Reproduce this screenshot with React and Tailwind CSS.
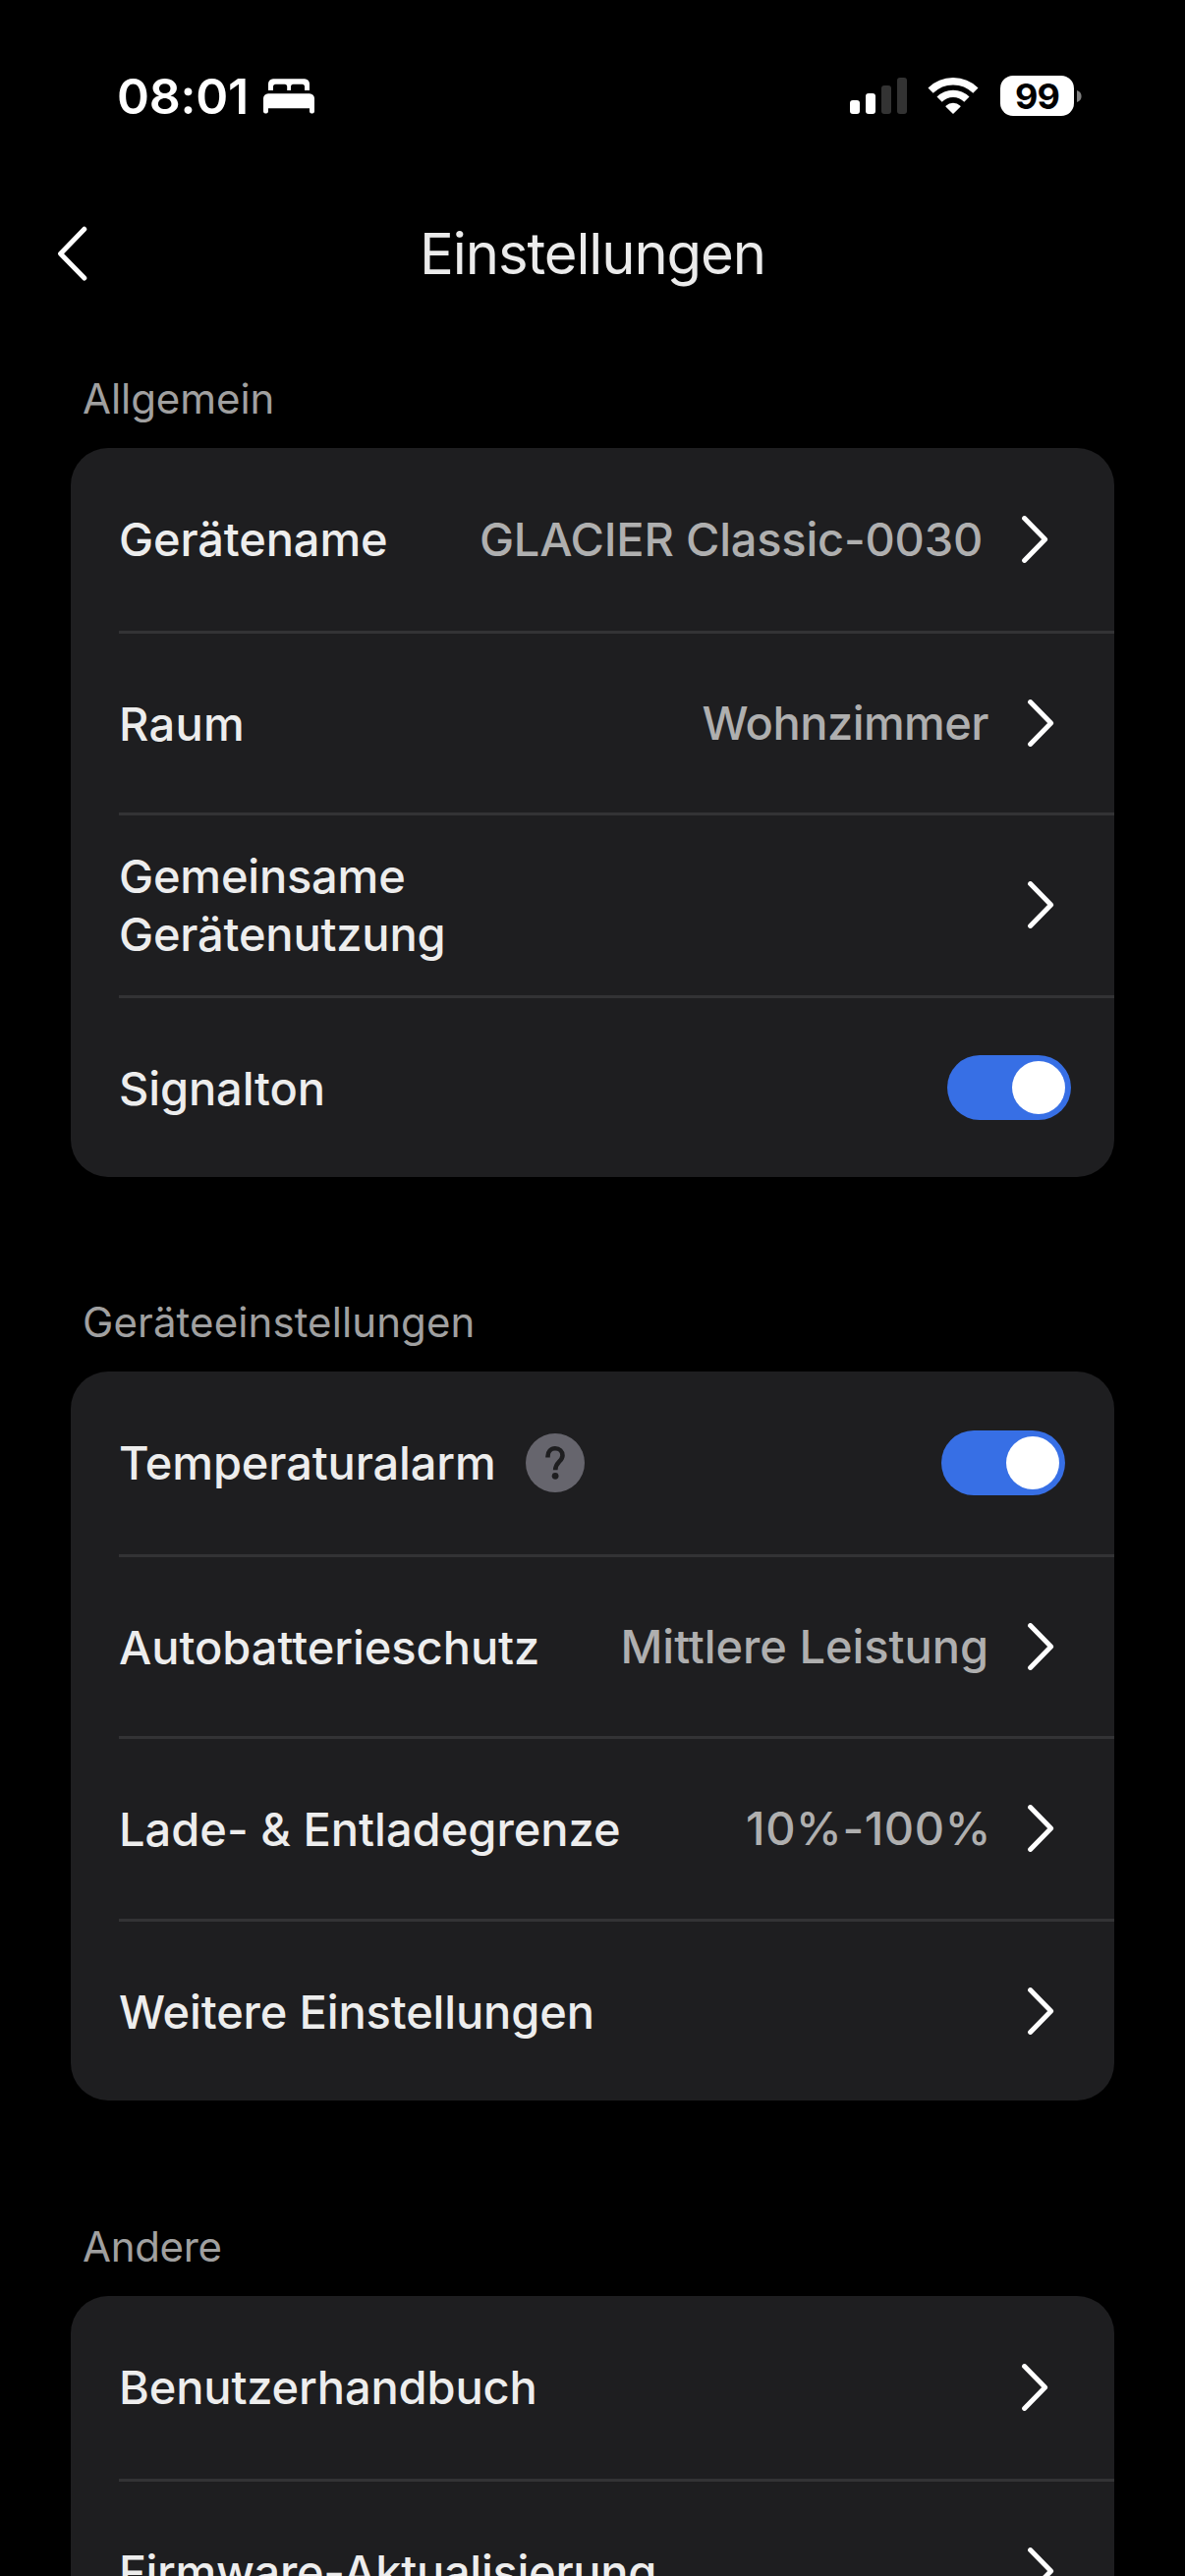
import React, { useState } from 'react';

const sections = [
    {
        title: 'Allgemein',
        className: 'mt-9',
        titleClass: 'tracking-[-0.06px]',
        rows: [
            { label: 'Gerätename', labelClass: 'tracking-[-0.14px]', value: 'GLACIER Classic-0030', valueClass: 'tracking-[-0.23px]' },
            { label: 'Raum', labelClass: 'tracking-[0.3px]', value: 'Wohnzimmer', valueClass: 'tracking-[-0.55px]' },
            { label: 'Gemeinsame Gerätenutzung', labelClass: 'tracking-[-0.2px] w-[400px]' },
            { label: 'Signalton', labelClass: 'tracking-[-0.12px]', toggle: true },
        ],
    },
    {
        title: 'Geräteeinstellungen',
        className: 'mt-[98px]',
        titleClass: 'tracking-[0.1px]',
        rows: [
            { label: 'Temperaturalarm', labelClass: 'tracking-[-0.14px]', help: true, toggle: true },
            { label: 'Autobatterieschutz', labelClass: 'tracking-[-0.04px]', value: 'Mittlere Leistung', valueClass: 'tracking-[-0.05px]' },
            { label: 'Lade- & Entladegrenze', labelClass: 'tracking-normal', value: '10%-100%', valueClass: 'tracking-[0.6px] -mr-[3px]' },
            { label: 'Weitere Einstellungen', labelClass: 'tracking-[-0.15px]' },
        ],
    },
    {
        title: 'Andere',
        className: 'mt-[99px]',
        titleClass: 'tracking-[-0.32px]',
        rows: [
            { label: 'Benutzerhandbuch', labelClass: 'tracking-[-0.15px]' },
            { label: 'Firmware-Aktualisierung', labelClass: 'tracking-[-0.28px]' },
        ],
    },
];

// Row heights include the 3px divider
const rowHeights = ['h-[189px]', 'h-[185px]', 'h-[186px] pb-px', 'h-[182px]'];

const BedIcon = () => (
    <svg width="52" height="36" viewBox="0 0 52 36" fill="white">
        <path d="M5 12V5.5A5 5 0 0 1 10 .3H42A5 5 0 0 1 47 5.5V12H42V8.2A2.5 2.5 0 0 0 39.5 5.7H30.5A2.5 2.5 0 0 0 28 8.2V12H24.2V8.2A2.5 2.5 0 0 0 21.7 5.7H12.5A2.5 2.5 0 0 0 10 8.2V12Z" />
        <path d="M0 20.5A5 5 0 0 1 5 15.3H47A5 5 0 0 1 52 20.5V33.6A1.8 1.8 0 0 1 50.2 35.4H48.8A1.8 1.8 0 0 1 47 33.6V30.3H5V33.6A1.8 1.8 0 0 1 3.2 35.4H1.8A1.8 1.8 0 0 1 0 33.6Z" />
    </svg>
);

const SignalIcon = () => (
    <svg width="58" height="37" viewBox="0 0 58 37" fill="white">
        <rect x="0" y="23" width="10" height="14" rx="3" />
        <rect x="16" y="16" width="10" height="21" rx="3" />
        <rect x="32" y="8" width="10" height="29" rx="3" fill="#333333" />
        <rect x="48" y="0" width="10" height="37" rx="3" fill="#333333" />
    </svg>
);

const WifiIcon = () => (
    <svg width="52" height="37" viewBox="0 0.5 52 37" fill="none" stroke="white" strokeWidth="7.4">
        <path d="M3.1 13.7A32.4 32.4 0 0 1 48.9 13.7" />
        <path d="M12.1 22.7A19.6 19.6 0 0 1 39.9 22.7" />
        <path d="M19.2 29.8A9.8 9.8 0 0 1 32.8 29.8L26 36.4Z" fill="white" stroke="white" strokeWidth="1.6" strokeLinejoin="round" />
    </svg>
);

const BatteryIcon = () => (
    <div className="flex items-center gap-[3px]">
        <div className="flex h-[41px] w-[75px] items-center justify-center rounded-[13px] bg-white text-[36px] font-bold leading-none tracking-[-0.8px] text-black">
            99
        </div>
        <svg width="5" height="12" viewBox="0 0 5 12" fill="#7f7f7f">
            <path d="M0 0C3 .9 4.6 3.2 4.6 6S3 11.1 0 12Z" />
        </svg>
    </div>
);

const ChevronRight = () => (
    <svg width="27" height="48" viewBox="0 0 27 48" fill="none" stroke="white" strokeWidth="5" strokeLinecap="round" strokeLinejoin="round">
        <path d="M2.6 2.6L23.6 24L2.6 45.4" />
    </svg>
);

const HelpIcon = () => (
    <svg className="ml-[30px]" width="60" height="60" viewBox="0 0 60 60">
        <circle cx="30" cy="30" r="30" fill="#66656d" />
        <path d="M22.5 24.6V23.4C22.5 18.6 25.6 15.3 30 15.3S37.5 18.4 37.5 22.4C37.5 28.2 30.2 29.2 30.2 37.2" fill="none" stroke="#1e1e20" strokeWidth="4.6" />
        <circle cx="30.1" cy="43.3" r="3.4" fill="#1e1e20" />
    </svg>
);

const Toggle = () => {
    const [on, setOn] = useState(true);

    return (
        <button
            type="button"
            role="switch"
            aria-checked={on}
            onClick={() => setOn(!on)}
            className={`flex h-[66px] w-[126px] items-center rounded-full px-1.5 ${on ? 'justify-end bg-[#376fe5]' : 'justify-start bg-[#3a3a3c]'}`}
        >
            <span className="size-[54px] rounded-full bg-white" />
        </button>
    );
};

const Row = ({ row, index }) => {
    // The first row of a card sits 6px further in than the others
    const inset = index === 0
        ? (row.toggle ? 'pr-[50px]' : 'pr-[67px]')
        : (row.toggle ? 'pr-11' : 'pr-[61px]');

    return (
        <div className={`ml-[49px] flex items-center ${inset} ${rowHeights[index]} ${index === 3 ? '' : 'border-b-[3px] border-[#333335]'}`}>
            <span className={`text-[47px] font-medium leading-[59px] text-[#ededed] ${index === 0 ? 'pb-0.5' : ''} ${row.labelClass}`}>
                {row.label}
            </span>
            {row.help && <HelpIcon />}
            <div className="ml-auto flex items-center gap-10">
                {row.value && (
                    <span className={`pb-0.5 text-[47px] font-medium leading-[59px] text-[#afafaf] ${row.valueClass}`}>{row.value}</span>
                )}
                {row.toggle ? <Toggle /> : <ChevronRight />}
            </div>
        </div>
    );
};

const App = () => {
    return (
        <div className="h-[2622px] w-[1206px] overflow-hidden bg-black font-['Inter',sans-serif]">
            <div className="flex h-[196px] items-center justify-between pl-[119px] pr-[105px]">
                <div className="flex items-center gap-[15px]">
                    <span className="text-[50px] font-semibold leading-none tracking-[-0.23px] text-white">08:01</span>
                    <BedIcon />
                </div>
                <div className="mb-px flex items-center gap-[22px]">
                    <div className="flex items-center gap-[21px]">
                        <SignalIcon />
                        <WifiIcon />
                    </div>
                    <BatteryIcon />
                </div>
            </div>

            <header className="grid h-[124px] grid-cols-[1fr_auto_1fr] items-center px-[58px]">
                <svg width="31" height="56" viewBox="0 0 31 56" fill="none" stroke="white" strokeWidth="5" strokeLinecap="round" strokeLinejoin="round">
                    <path d="M27.8 3.2L3.6 28.2L27.8 53" />
                </svg>
                <h1 className="text-[58px] font-normal leading-none tracking-[-1.12px] text-[#ebebeb]">Einstellungen</h1>
            </header>

            {sections.map((section) => (
                <section key={section.title} className={`px-[72px] ${section.className}`}>
                    <h2 className={`flex h-[100px] items-center pb-0.5 pl-3 text-[42px] font-normal text-[#a0a0a0] ${section.titleClass}`}>
                        {section.title}
                    </h2>
                    <div className="rounded-[38px] bg-[#1e1e20]">
                        {section.rows.map((row, index) => (
                            <Row key={row.label} row={row} index={index} />
                        ))}
                    </div>
                </section>
            ))}
        </div>
    );
};

export default App;
